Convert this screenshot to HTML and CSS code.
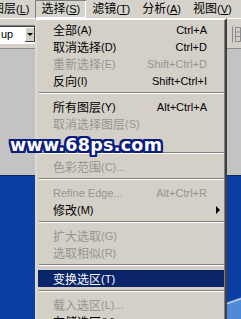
FILE: index.html
```html
<!DOCTYPE html>
<html lang="zh-CN">
<head>
  <meta charset="UTF-8">
  <meta name="viewport" content="width=device-width, initial-scale=1.0">
  <title>选择菜单</title>
  <link rel="stylesheet" href="styles.css">
</head>
<body>
  <div class="screen">
    <div class="menubar">
      <span class="mb-item first">图层<span class="k">(<u>L</u>)</span></span>
      <span class="mb-item open">选择<span class="k">(<u>S</u>)</span></span>
      <span class="mb-item">滤镜<span class="k">(<u>T</u>)</span></span>
      <span class="mb-item">分析<span class="k">(<u>A</u>)</span></span>
      <span class="mb-item">视图<span class="k">(<u>V</u>)</span></span>
    </div>
    <div class="toolbar">
      <div class="combo">
        <span class="combo-field">up</span>
        <span class="combo-btn"></span>
      </div>
      <svg class="tool-icon" width="12" height="17" viewBox="0 0 12 17">
        <path d="M3.5 0.5v16M6.5 1.5h5v14h-5zM6.5 6h5M6.5 10.5h5" fill="none" stroke="#8a8a8a"/>
      </svg>
    </div>
    <div class="workspace"></div>
    <div class="desktop"></div>

    <!-- 下拉菜单 -->
    <ul class="dropdown">
      <li>全部<span class="k">(A)</span><span class="sc">Ctrl+A</span></li>
      <li>取消选择<span class="k">(D)</span><span class="sc">Ctrl+D</span></li>
      <li class="off">重新选择<span class="k">(E)</span><span class="sc">Shift+Ctrl+D</span></li>
      <li>反向<span class="k">(I)</span><span class="sc">Shift+Ctrl+I</span></li>
      <li class="sep"></li>
      <li>所有图层<span class="k">(Y)</span><span class="sc">Alt+Ctrl+A</span></li>
      <li class="off">取消选择图层<span class="k">(S)</span></li>
      <li class="off"></li>
      <li class="sep"></li>
      <li class="off">色彩范围<span class="k">(C)...</span></li>
      <li class="sep"></li>
      <li class="off"><span class="k">Refine Edge...</span><span class="sc">Alt+Ctrl+R</span></li>
      <li class="sub">修改<span class="k">(M)</span></li>
      <li class="sep"></li>
      <li class="off">扩大选取<span class="k">(G)</span></li>
      <li class="off">选取相似<span class="k">(R)</span></li>
      <li class="sep"></li>
      <li class="hot">变换选区<span class="k">(T)</span></li>
      <li class="sep"></li>
      <li class="off">载入选区<span class="k">(L)...</span></li>
      <li>存储选区<span class="k">(V)...</span></li>
    </ul>

    <div class="watermark">www.68ps.com</div>
  </div>
</body>
</html>
```

FILE: styles.css
```css
html, body {
  margin: 0;
  padding: 0;
}
body {
  font-family: "Liberation Sans", "Noto Sans CJK SC", sans-serif;
  font-size: 12px;
  color: #000;
}
.screen {
  position: relative;
  width: 241px;
  height: 319px;
  overflow: hidden;
  display: flex;
  flex-direction: column;
  background: #d4d0c8;
}
.k {
  font-size: 11px;
}

/* 菜单栏 */
.menubar {
  height: 18px;
  display: flex;
  white-space: nowrap;
  background: #d6d3cd;
}
.mb-item {
  padding: 0 6px;
  line-height: 19px;
}
.mb-item.first {
  margin-left: -14px;
}
.mb-item.open {
  box-shadow: inset 1px 1px #808080, inset -1px -1px #fff;
}

/* 工具栏 */
.toolbar {
  height: 29px;
  border-top: 1px solid #fff;
  border-bottom: 1px solid #8c8c8c;
  display: flex;
  align-items: center;
  justify-content: space-between;
}
.combo {
  display: flex;
  height: 19px;
  margin-left: -3px;
  margin-top: 2px;
  box-sizing: border-box;
  border: 1px solid;
  border-color: #808080 #fff #fff #808080;
  box-shadow: inset 1px 1px #404040;
  background: #fff;
}
.combo-field {
  width: 24px;
  padding-left: 3px;
  font-size: 11px;
  line-height: 17px;
}
.combo-btn {
  position: relative;
  width: 10px;
  margin: 1px 1px 1px 0;
  background: #d4d0c8;
  box-shadow: inset -1px -1px #404040, inset 1px 1px #fff;
}
.combo-btn::after {
  content: "";
  position: absolute;
  left: 2px;
  top: 6px;
  border-top: 3px solid #000;
  border-left: 3px solid transparent;
  border-right: 3px solid transparent;
}
.tool-icon {
  display: block;
  margin-top: 2px;
}

.workspace {
  height: 126px;
  background: #c3c3c3;
}
.desktop {
  flex: 1;
  border-top: 1px solid #13265e;
  background: radial-gradient(circle 293px at 330px 400px, #4d8ad8 0 290px, #d9e4f4 291px, #0b3ea3 293px);
}

/* 下拉菜单 */
.dropdown {
  position: absolute;
  left: 35px;
  top: 18px;
  width: 192px;
  box-sizing: border-box;
  margin: 0;
  padding: 1px;
  list-style: none;
  background: #d4d0c8;
  border: 2px solid;
  border-color: #fff #404040 #404040 #dcd9d2;
  box-shadow: inset -1px 0 #808080;
  white-space: nowrap;
}
.dropdown li {
  position: relative;
  display: flex;
  align-items: center;
  height: 17px;
  padding: 0 17px 0 15px;
}
.dropdown .sc {
  margin-left: auto;
  font-size: 11px;
}
.dropdown .off {
  color: #97948e;
}
.dropdown .hot {
  background: #0a246a;
  color: #fff;
}
.dropdown .sep {
  height: 9px;
  padding: 0;
}
.dropdown .sep::before {
  content: "";
  position: absolute;
  left: 1px;
  right: 0;
  top: 3px;
  border-top: 1px solid #808080;
  border-bottom: 1px solid #fff;
}
.dropdown .sub::after {
  content: "";
  position: absolute;
  right: 4px;
  top: 5px;
  border-left: 4px solid #000;
  border-top: 4px solid transparent;
  border-bottom: 4px solid transparent;
}

/* 水印 */
.watermark {
  position: absolute;
  left: 10px;
  top: 135px;
  font-family: "DejaVu Sans", sans-serif;
  font-weight: 700;
  font-size: 17.5px;
  line-height: 20px;
  letter-spacing: 0.3px;
  color: #fff;
  text-shadow:
    2px 0 #0b1d7c, -2px 0 #0b1d7c, 0 2px #0b1d7c, 0 -2px #0b1d7c,
    2px 2px #0b1d7c, -2px 2px #0b1d7c, 2px -2px #0b1d7c, -2px -2px #0b1d7c,
    1px 2px #0b1d7c, 2px 1px #0b1d7c, -1px 2px #0b1d7c, -2px 1px #0b1d7c,
    1px -2px #0b1d7c, 2px -1px #0b1d7c, -1px -2px #0b1d7c, -2px -1px #0b1d7c;
}
```
